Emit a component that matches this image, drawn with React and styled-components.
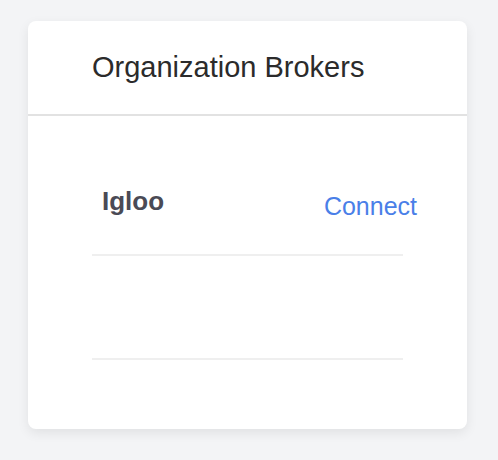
import React from "react";
import styled, { createGlobalStyle } from "styled-components";

const Global = createGlobalStyle`
  html, body {
    margin: 0;
    padding: 0;
    background: #f3f4f6;
    font-family: "Liberation Sans", Arial, sans-serif;
  }
`;

const Page = styled.div`
  padding: 21px 31px 0 28px;
  height: 460px;
  box-sizing: border-box;
`;

const Card = styled.div`
  width: 439px;
  height: 408px;
  background: #fff;
  border-radius: 8px;
  box-shadow: 0 4px 12px rgba(0, 0, 0, 0.08);
  display: flex;
  flex-direction: column;
`;

const Header = styled.div`
  height: 95px;
  padding-left: 64px;
  display: flex;
  align-items: center;
  border-bottom: 2px solid #e2e2e2;
  box-sizing: border-box;
`;

const Title = styled.h2`
  margin: 0;
  font-size: 29px;
  font-weight: 400;
  color: #2b2b2b;
`;

const List = styled.div`
  width: 311px;
  margin: 36px 0 0 64px;
`;

const Row = styled.div`
  height: 104px;
  box-sizing: border-box;
  border-bottom: 2px solid #efefef;
  display: flex;
  justify-content: space-between;
  align-items: flex-start;
  padding: 34px 0 0 10px;
`;

const Name = styled.span`
  font-size: 26px;
  font-weight: 700;
  color: #4a4a55;
`;

const Connect = styled.a`
  font-size: 25px;
  color: #4a7fe8;
  margin: 6px -14px 0 0;
  cursor: pointer;
`;

export default function App() {
  return (
    <Page>
      <Global />
      <Card>
        <Header>
          <Title>Organization Brokers</Title>
        </Header>
        <List>
          <Row>
            <Name>Igloo</Name>
            <Connect>Connect</Connect>
          </Row>
          <Row />
        </List>
      </Card>
    </Page>
  );
}
